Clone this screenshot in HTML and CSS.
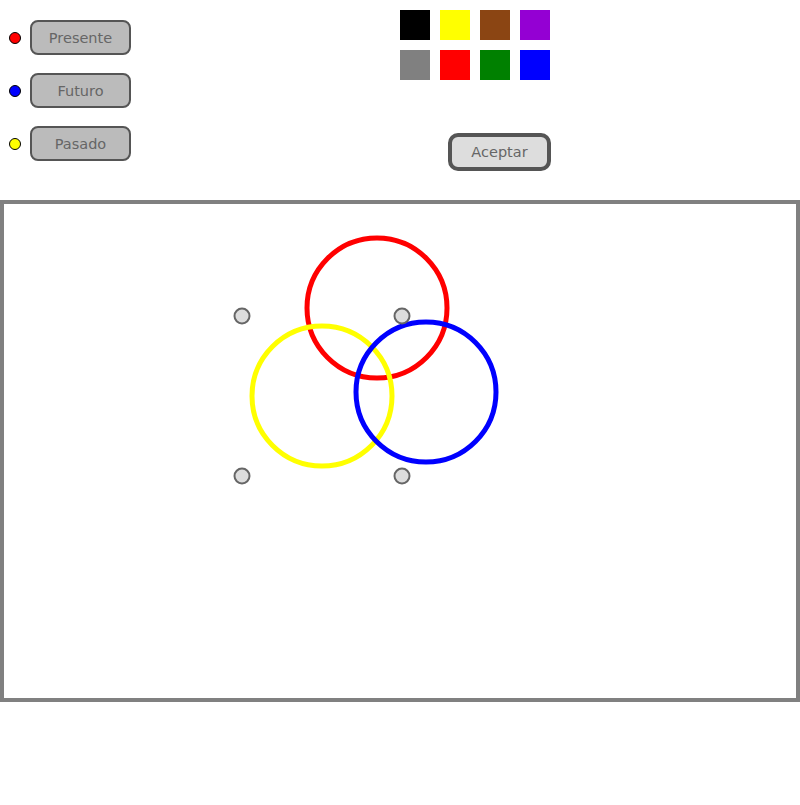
FILE: index.html
```html
<!DOCTYPE html>
<html>
<head>
<meta charset="utf-8">
<link rel="stylesheet" href="styles.css">
</head>
<body>
<div class="top">
  <div class="layers">
    <div class="layer"><span class="dot red"></span><button class="btn">Presente</button></div>
    <div class="layer"><span class="dot blue"></span><button class="btn">Futuro</button></div>
    <div class="layer"><span class="dot yellow"></span><button class="btn">Pasado</button></div>
  </div>
  <div class="palette-area">
    <div class="palette">
      <span class="sw" style="background:#000000"></span>
      <span class="sw" style="background:#ffff00"></span>
      <span class="sw" style="background:#8b4513"></span>
      <span class="sw" style="background:#9400d3"></span>
      <span class="sw" style="background:#808080"></span>
      <span class="sw" style="background:#ff0000"></span>
      <span class="sw" style="background:#008000"></span>
      <span class="sw" style="background:#0000ff"></span>
    </div>
    <button class="accept">Aceptar</button>
  </div>
</div>
<div class="canvas">
  <svg class="drawing" width="792" height="494" viewBox="4 204 792 494">
    <circle cx="377" cy="308" r="70" fill="none" stroke="#ff0000" stroke-width="5"/>
    <circle cx="322" cy="396" r="70" fill="none" stroke="#ffff00" stroke-width="5"/>
    <circle cx="426" cy="392" r="70" fill="none" stroke="#0000ff" stroke-width="5"/>
    <circle cx="242" cy="316" r="7.5" fill="#dddddd" stroke="#666666" stroke-width="2"/>
    <circle cx="402" cy="316" r="7.5" fill="#dddddd" stroke="#666666" stroke-width="2"/>
    <circle cx="242" cy="476" r="7.5" fill="#dddddd" stroke="#666666" stroke-width="2"/>
    <circle cx="402" cy="476" r="7.5" fill="#dddddd" stroke="#666666" stroke-width="2"/>
  </svg>
</div>
</body>
</html>
```

FILE: styles.css
```css
html, body {
  margin: 0;
  padding: 0;
  background: #ffffff;
  font-family: "DejaVu Sans", sans-serif;
}
.top {
  display: flex;
  height: 200px;
}
.layers {
  width: 400px;
  display: flex;
  flex-direction: column;
  gap: 18px;
  padding-top: 20px;
  padding-left: 9px;
  box-sizing: border-box;
}
.layer {
  display: flex;
  align-items: center;
  gap: 9px;
}
.dot {
  width: 12px;
  height: 12px;
  border-radius: 50%;
  border: 1.5px solid #000;
  box-sizing: border-box;
}
.red { background: #ff0000; }
.blue { background: #0000ff; }
.yellow { background: #ffff00; }
.btn {
  width: 101px;
  height: 35px;
  box-sizing: border-box;
  border: 2px solid #555555;
  border-radius: 8px;
  background: #bbbbbb;
  color: #666666;
  font-family: "DejaVu Sans", sans-serif;
  font-size: 14.5px;
  padding: 0;
}
.palette-area {
  display: flex;
  flex-direction: column;
  align-items: flex-start;
  padding-top: 10px;
}
.palette {
  display: grid;
  grid-template-columns: repeat(4, 30px);
  grid-auto-rows: 30px;
  gap: 10px;
}
.sw {
  display: block;
}
.accept {
  margin-top: 53px;
  margin-left: 48px;
  width: 103px;
  height: 38px;
  box-sizing: border-box;
  border: 4px solid #555555;
  border-radius: 10px;
  background: #dddddd;
  color: #666666;
  font-family: "DejaVu Sans", sans-serif;
  font-size: 14.5px;
  padding: 0;
}
.canvas {
  width: 800px;
  height: 502px;
  box-sizing: border-box;
  border: 4px solid #808080;
}
.drawing {
  display: block;
}
```
